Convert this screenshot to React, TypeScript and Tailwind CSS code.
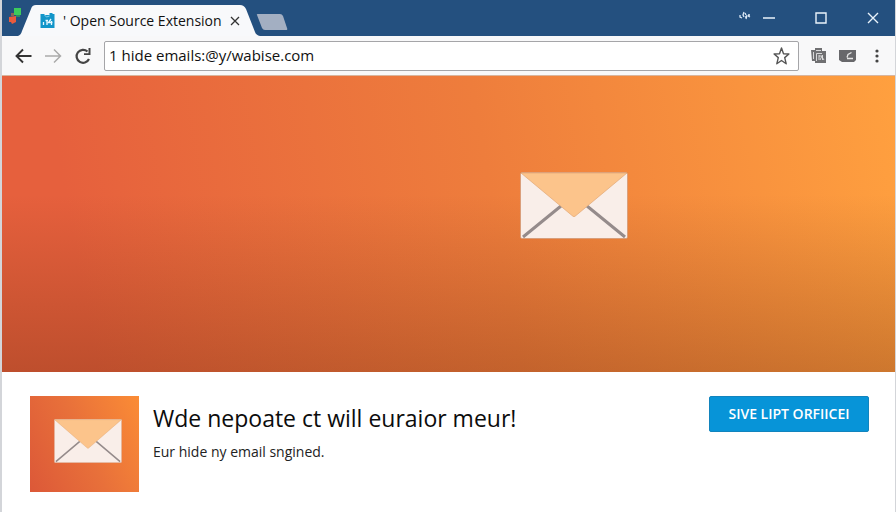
function Envelope({ className, line }: { className: string; line: number }) {
  return (
    <svg viewBox="0 0 108 67" preserveAspectRatio="none" className={className} aria-hidden="true">
      <rect x="0.5" y="0.5" width="107" height="66" rx="1.5" fill="#f9eee9" stroke="#c98f6c" strokeWidth="0.6" />
      <path d="M3 65 L41 34 M105 65 L67 34" stroke="#958b8b" strokeWidth={line} fill="none" />
      <path d="M1 1 H107 L56 43.5 Q54 46 52 43.5 Z" fill="#fcc48b" stroke="#e2a775" strokeWidth="0.7" />
    </svg>
  )
}

function TitleBar() {
  return (
    <header className="flex h-9 shrink-0 items-end bg-[#24507f]">
      <svg width="20" height="36" viewBox="0 0 20 36" className="-mr-1 shrink-0" aria-hidden="true">
        <path d="M12 8h7v7h-7z" fill="#3ccb5c" />
        <path d="M7 17l7-1v6l-4 2-1-2H7z" fill="#e95b3d" />
        <path d="M9 13h3v3H9z" fill="#8c6355" />
        <path d="M14 15h4v2h-4z" fill="#2c8b62" />
      </svg>

      {/* Active tab */}
      <div className="flex h-[31px] items-stretch">
        <svg width="18" height="31" viewBox="0 0 18 31" className="shrink-0" aria-hidden="true">
          <path d="M0 31 Q3 30 4 26 L13 4 Q14 0 18 0 V31 Z" fill="#f8f9fb" />
        </svg>
        <div className="flex items-center bg-[#f8f9fb] pl-1">
          <svg width="15" height="15" viewBox="0 0 14 15" className="shrink-0" aria-hidden="true">
            <path d="M0 1h4v1h5V0h3v1h2v14H0z" fill="#1295c9" />
            <path d="M4 2l2 2 3-1" stroke="#7fd0ee" strokeWidth="1" fill="none" />
            <path d="M3 9v3M5 7.500h2.500M6.500 8v4M10.500 6L8 9.500h4M11 8v4" stroke="#e8f8ff" strokeWidth="1.300" fill="none" />
          </svg>
          <span className="pl-2 text-sm whitespace-pre text-[#111]">' Open Source Extension</span>
          <button type="button" aria-label="Close tab" className="ml-2">
            <svg width="10" height="10" viewBox="0 0 10 10" aria-hidden="true">
              <path d="M1 1l8 8M9 1L1 9" stroke="#333" strokeWidth="1.300" />
            </svg>
          </button>
        </div>
        <svg width="20" height="31" viewBox="0 0 20 31" className="shrink-0" aria-hidden="true">
          <path d="M0 0 Q4 0 6 4 L15 27 Q16 30 20 31 H0 Z" fill="#f8f9fb" />
        </svg>
      </div>
      <button type="button" aria-label="New tab" className="-ml-1 self-center pt-2">
        <svg width="32" height="16" viewBox="0 0 32 16" aria-hidden="true">
          <path d="M1 1 Q0 0 2 0 H24 Q26 0 27 2 L31 14 Q32 16 30 16 H9 Q7 16 6 14 Z" fill="#a3afc2" />
        </svg>
      </button>

      {/* Window buttons */}
      <div className="ml-auto flex items-center self-center pr-4">
        <svg width="12" height="12" viewBox="0 0 12 12" className="mr-3 mb-1" aria-hidden="true">
          <path d="M1 5v2l2 1M5 2L4 5l1 2M6 3l1 2M8 5L7 9M6 7h2M9 6l2 1M9 5h2" stroke="#dbe8f5" strokeWidth="1.300" fill="none" />
        </svg>
        <button type="button" aria-label="Minimize" className="mr-10">
          <svg width="12" height="12" viewBox="0 0 12 12" aria-hidden="true">
            <path d="M0 6h12" stroke="#eaf3fb" strokeWidth="1.500" />
          </svg>
        </button>
        <button type="button" aria-label="Maximize" className="mr-10">
          <svg width="12" height="12" viewBox="0 0 12 12" aria-hidden="true">
            <path d="M1 1h10v10H1z" stroke="#eaf3fb" strokeWidth="1.400" fill="none" />
          </svg>
        </button>
        <button type="button" aria-label="Close">
          <svg width="12" height="12" viewBox="0 0 12 12" aria-hidden="true">
            <path d="M1 1l10 10M11 1L1 11" stroke="#eaf3fb" strokeWidth="1.400" />
          </svg>
        </button>
      </div>
    </header>
  )
}

function Toolbar() {
  return (
    <nav className="flex h-10 shrink-0 items-center border-b border-[#d9b59d] bg-[#f8f8f9] pr-3 pl-3">
      <button type="button" aria-label="Back">
        <svg width="18" height="16" viewBox="0 0 18 16" aria-hidden="true">
          <path d="M17.500 8H3M9 1.500L2.500 8 9 14.500" stroke="#333" strokeWidth="1.900" fill="none" />
        </svg>
      </button>
      <button type="button" aria-label="Forward" className="ml-3">
        <svg width="18" height="16" viewBox="0 0 18 16" aria-hidden="true">
          <path d="M1 8h15M10 1.500L16.500 8 10 14.500" stroke="#aaa" strokeWidth="1.500" fill="none" />
        </svg>
      </button>
      <button type="button" aria-label="Reload" className="ml-3">
        <svg width="18" height="18" viewBox="0 0 18 18" aria-hidden="true">
          <path d="M15 12A6.500 6.500 0 1 1 13.500 4.500" stroke="#444" strokeWidth="2.200" fill="none" />
          <path d="M16.500 1v7H10V6.200h4.500V1z" fill="#444" />
        </svg>
      </button>
      <div className="ml-3 flex h-[30px] flex-1 items-center rounded-xs border border-[#a5a5a8] bg-white pr-2">
        <input
          type="text"
          aria-label="Address"
          defaultValue="1 hide emails:@y/wabise.com"
          className="min-w-0 flex-1 bg-transparent pl-1 text-[15px] text-[#111] outline-none"
        />
        <button type="button" aria-label="Bookmark">
          <svg width="17" height="18" viewBox="0 0 16 18" aria-hidden="true">
            <path
              d="M8 1l2 5.700 5.400.3-4.200 3.600 1.500 6.200L8 13.500l-4.700 3.300 1.500-6.200L.6 7 6 6.700z"
              stroke="#555"
              strokeWidth="1.400"
              strokeLinejoin="round"
              fill="none"
            />
          </svg>
        </button>
      </div>
      <button type="button" aria-label="Clipboard extension" className="ml-3">
        <svg width="16" height="16" viewBox="0 0 16 16" aria-hidden="true">
          <path d="M0 2h4V0h7v3h4v12H4v-2H1z" fill="#707072" />
          <path d="M2.500 4v7M5 2.500h5M5.500 13V5.500H11M8 7v5M8 8h3L9 12M11.500 7v5M11 9l2 3" stroke="#e4e4e4" strokeWidth="0.900" fill="none" />
        </svg>
      </button>
      <button type="button" aria-label="Notes extension" className="ml-3">
        <svg width="18" height="14" viewBox="0 0 18 14" aria-hidden="true">
          <path d="M0 1h17v10l-2 2H3l-3-2z" fill="#68686b" />
          <path d="M12.500 3.500L9 5.500l-1 3M8 9.500h6" stroke="#e6e6e6" strokeWidth="1.300" fill="none" />
        </svg>
      </button>
      <button type="button" aria-label="Menu" className="ml-4">
        <svg width="10" height="16" viewBox="0 0 10 16" aria-hidden="true">
          <circle cx="4" cy="3" r="1.600" fill="#444" />
          <circle cx="4" cy="8" r="1.600" fill="#444" />
          <circle cx="4" cy="13" r="1.600" fill="#444" />
        </svg>
      </button>
    </nav>
  )
}

export default function App() {
  return (
    <div className="flex min-h-screen flex-col border-r border-l-2 border-[#d3d5d9] bg-white font-['Open_Sans','Noto_Sans',sans-serif]">
      <TitleBar />
      <Toolbar />

      {/* Hero banner */}
      <main className="flex flex-1 flex-col">
        <section className="flex flex-1 bg-linear-80 from-[#e6603d] from-10% via-[#ee7d3c] via-55% to-[#ffa03f]">
          <div className="flex flex-1 bg-linear-to-b from-transparent from-40% to-[#66280a50] pt-24 pb-32 pl-[58%]">
            <Envelope className="h-[67px] w-[108px]" line={3} />
          </div>
        </section>

        {/* Extension details */}
        <section className="flex items-start pt-6 pr-6.5 pb-5 pl-7">
          <div className="flex h-24 w-[109px] shrink-0 items-center justify-center bg-linear-65 from-[#dc5838] via-[#e8703a] to-[#fb8c35] pb-1.5 pl-1.5">
            <Envelope className="h-11 w-[68px]" line={2.5} />
          </div>
          <div className="min-w-0 flex-1 pl-3.5">
            <h1 className="pt-1 text-[23px] leading-9 text-[#0c0c0c]">Wde nepoate ct will euraior meur!</h1>
            <p className="pt-1 text-sm leading-6 text-[#222]">Eur hide ny email sngined.</p>
          </div>
          <button type="button" className="h-9 w-40 shrink-0 rounded-xs border border-[#1284bd] bg-[#0794d8] text-sm font-semibold text-white">
            SIVE LIPT ORFIICEI
          </button>
        </section>
      </main>
    </div>
  )
}
